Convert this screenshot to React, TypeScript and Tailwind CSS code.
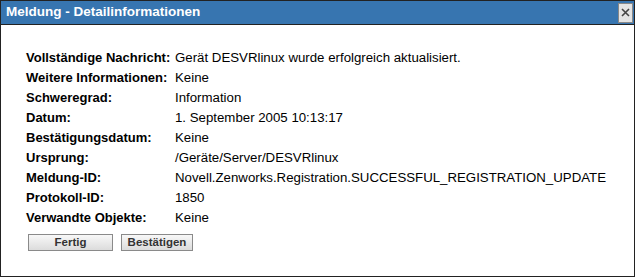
const ROWS: [string, string][] = [
  ['Vollständige Nachricht:', 'Gerät DESVRlinux wurde erfolgreich aktualisiert.'],
  ['Weitere Informationen:', 'Keine'],
  ['Schweregrad:', 'Information'],
  ['Datum:', '1. September 2005 10:13:17'],
  ['Bestätigungsdatum:', 'Keine'],
  ['Ursprung:', '/Geräte/Server/DESVRlinux'],
  ['Meldung-ID:', 'Novell.Zenworks.Registration.SUCCESSFUL_REGISTRATION_UPDATE'],
  ['Protokoll-ID:', '1850'],
  ['Verwandte Objekte:', 'Keine'],
];

const BTN = 'h-[17px] border border-[#8a8a8a] bg-gradient-to-b from-[#f8f8f8] to-[#dcdcdc] text-[11.5px] font-bold text-[#333] leading-none';

export default function App() {
  return (
    <div className="w-[635px] h-[278px] bg-white font-['Liberation_Sans',Arial,sans-serif] text-black">
      <div className="flex h-[277px] flex-col border border-[#222]">
        <div className="flex h-[24px] items-center justify-between border-b border-[#222] bg-[#3775b0] pl-[5px] pr-[1px]">
          <span className="text-[13.5px] font-bold text-white">Meldung - Detailinformationen</span>
          <button className="flex h-[20px] w-[15px] items-center justify-center border border-[#888] bg-[#e4e4e4]">
            <svg width="11" height="11" viewBox="0 0 11 11">
              <path d="M2 2 L9 9 M9 2 L2 9" stroke="#444" strokeWidth="1.6" />
            </svg>
          </button>
        </div>
        <div className="pl-[25px] pt-[23px]">
          <div className="grid grid-cols-[149px_1fr] text-[13px]">
            {ROWS.map(([label, value]) => (
              <div key={label} className="contents">
                <div className="h-[20px] leading-[20px] font-bold">{label}</div>
                <div className="h-[20px] leading-[20px] text-[13.25px]">{value}</div>
              </div>
            ))}
          </div>
          <div className="mt-[6px] flex gap-[8px] pl-[2px]">
            <button className={`${BTN} w-[85px]`}>Fertig</button>
            <button className={`${BTN} w-[72px]`}>Bestätigen</button>
          </div>
        </div>
      </div>
    </div>
  );
}
